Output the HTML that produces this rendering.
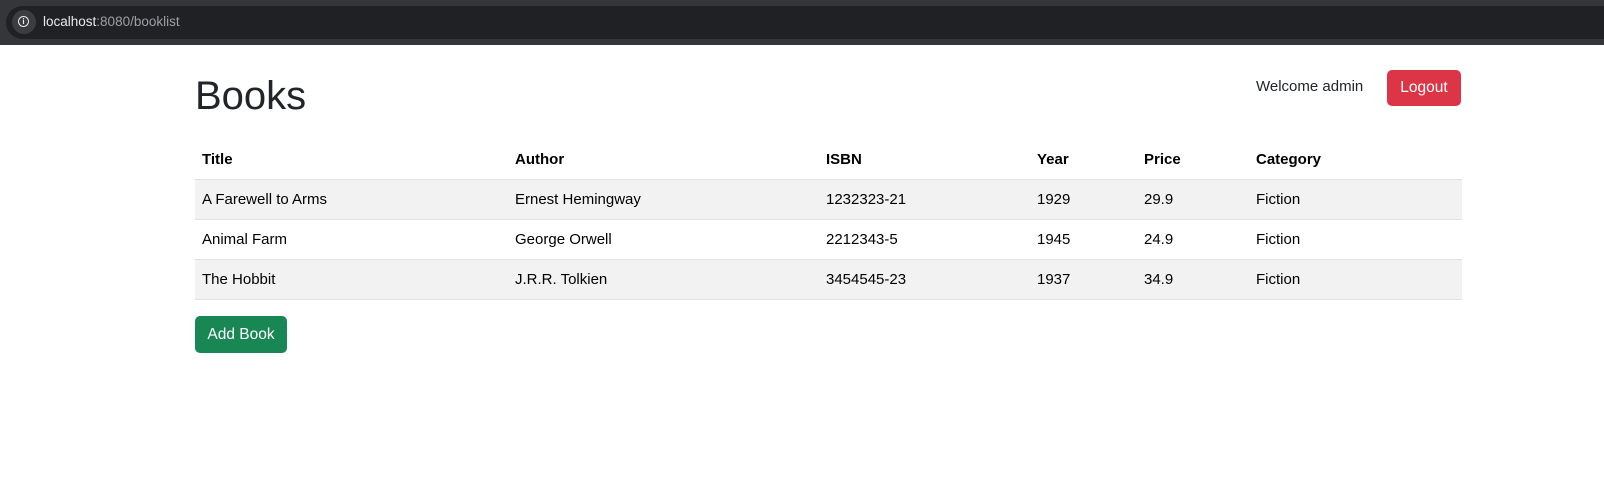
<!DOCTYPE html>
<html><head><style>
body{margin:0;width:1604px;height:495px;background:#fff;font-family:"Liberation Sans",sans-serif;color:#212529;position:relative;overflow:hidden}
.chrome{position:absolute;left:0;top:0;width:1604px;height:45px;background:#35363a}
.url{position:absolute;left:6px;top:6px;width:1598px;height:33px;background:#202124;border-radius:17px 0 0 17px}
.ic{position:absolute;left:12px;top:10px;width:24px;height:24px;border-radius:12px;background:#3c3d41}
.ic span{position:absolute;left:6px;top:6px;width:9px;height:9px;border:1.5px solid #e8eaed;border-radius:50%;color:#e8eaed;font-size:8px;line-height:9px;text-align:center;font-weight:bold}
.ut{position:absolute;left:43px;top:14px;font-size:13.5px;color:#e8eaed}
.ut i{font-style:normal;color:#9aa0a6}
h1{position:absolute;left:195px;top:72px;margin:0;font-size:40px;font-weight:500;line-height:48px}
.wel{position:absolute;left:1256px;top:78px;font-size:15px}
.btn{position:absolute;color:#fff;font-size:15.5px;border-radius:5px;text-align:center}
table{position:absolute;left:195px;top:140px;width:1267px;border-collapse:collapse;font-size:15px;color:#000}
td,th{height:39px;padding:0 7px;text-align:left;border-bottom:1px solid #dee2e6}
th{font-weight:bold}
tr.s td{background:#f2f2f2}
</style></head><body>
<div class="chrome"><div class="url"></div><div class="ic"><span>i</span></div><div class="ut">localhost<i>:8080/booklist</i></div></div>
<h1>Books</h1>
<div class="wel">Welcome admin</div>
<div class="btn" style="left:1387px;top:70px;width:74px;height:36px;line-height:36px;background:#dc3545">Logout</div>
<table>
<colgroup><col style="width:313px"><col style="width:311px"><col style="width:211px"><col style="width:107px"><col style="width:112px"><col></colgroup>
<tr><th>Title</th><th>Author</th><th>ISBN</th><th>Year</th><th>Price</th><th>Category</th></tr>
<tr class="s"><td>A Farewell to Arms</td><td>Ernest Hemingway</td><td>1232323-21</td><td>1929</td><td>29.9</td><td>Fiction</td></tr>
<tr><td>Animal Farm</td><td>George Orwell</td><td>2212343-5</td><td>1945</td><td>24.9</td><td>Fiction</td></tr>
<tr class="s"><td>The Hobbit</td><td>J.R.R. Tolkien</td><td>3454545-23</td><td>1937</td><td>34.9</td><td>Fiction</td></tr>
</table>
<div class="btn" style="left:195px;top:316px;width:92px;height:37px;line-height:37px;background:#198754">Add Book</div>
</body></html>
